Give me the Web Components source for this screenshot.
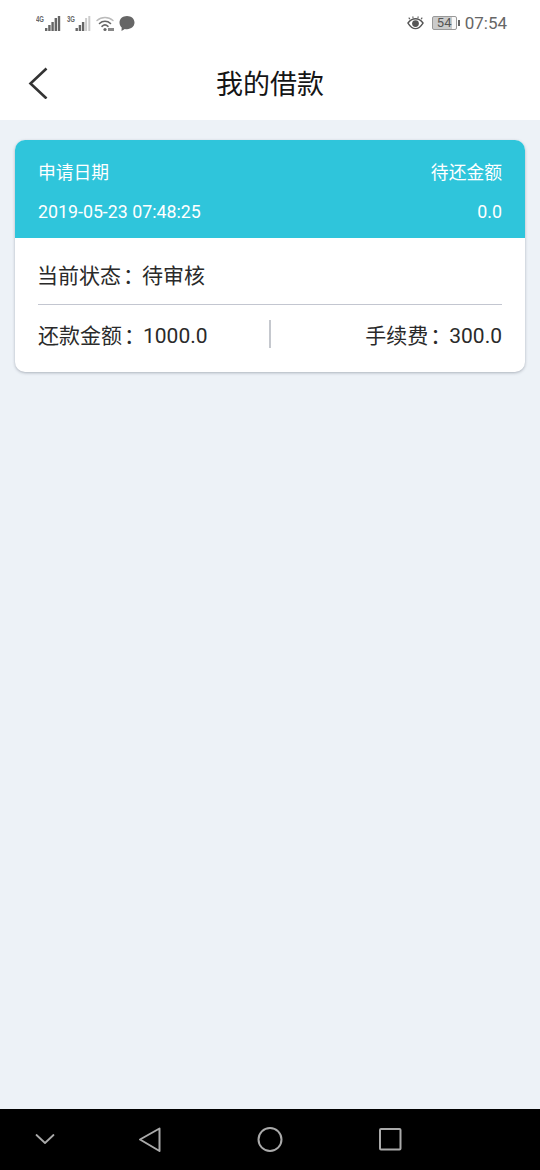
<!DOCTYPE html>
<html lang="zh">
<head>
<meta charset="UTF-8">
<meta name="viewport" content="width=device-width, initial-scale=1.0">
<title>我的借款</title>
<style>
    html, body { margin: 0; height: 100%; }
    body {
        width: 540px;
        height: 1170px;
        overflow: hidden;
        display: flex;
        flex-direction: column;
        background: #edf2f7;
        font-family: Roboto, "Noto Sans CJK SC", sans-serif;
    }
    page-content { flex: 1; }
</style>
</head>
<body>
<status-bar></status-bar>
<title-bar>我的借款</title-bar>
<page-content>
    <loan-card date="2019-05-23 07:48:25" remain="0.0" state="待审核" repay="1000.0" fee="300.0"></loan-card>
</page-content>
<nav-bar></nav-bar>

<script>
    class StatusBar extends HTMLElement {
        constructor() {
            super();
            const shadow = this.attachShadow({mode: 'open'});
            shadow.innerHTML = `
        <style>
          :host {
            display: flex;
            align-items: center;
            justify-content: space-between;
            height: 46px;
            padding: 0 33px 0 36px;
            background: #fff;
            color: #666;
            box-sizing: border-box;
          }
          .side { display: flex; align-items: center; }
          .time { font-size: 17px; margin-left: 5px; color: #666; }
          svg { display: block; }
          .tag {
            font: bold 9px "Liberation Sans", sans-serif;
            fill: #666;
          }
          .batt {
            width: 25px; height: 14px; box-sizing: border-box;
            border: 1px solid #999; border-radius: 2px;
            background: linear-gradient(90deg, #cbcbcb 84%, #f8f8f8 84%);
            font-size: 13px; line-height: 12px; text-align: center; color: #555;
            margin-left: 8px;
          }
          .nub { width: 2px; height: 6px; background: #666; margin-left: 1px; }
        </style>
        <div class="side">
          <svg width="100" height="20" viewBox="0 0 100 20">
            <text class="tag" x="0" y="9" textLength="8" lengthAdjust="spacingAndGlyphs">4G</text>
            <g fill="#666">
              <rect x="9" y="15" width="2.400" height="3"/><rect x="12.200" y="12" width="2.400" height="6"/>
              <rect x="15.400" y="9" width="2.400" height="9"/><rect x="18.600" y="5" width="2.400" height="13"/><rect x="21.800" y="3" width="2.400" height="15"/>
            </g>
            <text class="tag" x="31" y="9" textLength="8" lengthAdjust="spacingAndGlyphs">3G</text>
            <g fill="#666">
              <rect x="39.500" y="15" width="2.400" height="3"/><rect x="42.700" y="12" width="2.400" height="6"/><rect x="45.900" y="9" width="2.400" height="9"/>
            </g>
            <g fill="#ccc"><rect x="49.100" y="5" width="2" height="13"/><rect x="52.300" y="3" width="2" height="15"/></g>
            <g fill="none" stroke-linecap="round">
              <path d="M61 7.500a12 12 0 0 1 16 0" stroke="#bbb" stroke-width="1.400"/>
              <path d="M63.500 10.500a8 8 0 0 1 11 0" stroke="#666" stroke-width="1.600"/>
              <path d="M66 13.300a4.500 4.500 0 0 1 6 0" stroke="#666" stroke-width="1.600"/>
            </g>
            <circle cx="69" cy="16.500" r="1.600" fill="#666"/>
            <rect x="72" y="15" width="6" height="3" fill="#888"/>
            <path d="M91 3c4.300 0 7.500 2.800 7.500 6.600s-3.200 6.600-7.500 6.600c-.8 0-1.500-.1-2.200-.3L85.500 18l.2-3.500c-1.400-1.200-2.200-3-2.200-4.900C83.500 5.800 86.700 3 91 3z" fill="#666"/>
          </svg>
        </div>
        <div class="side">
          <svg width="17" height="15" viewBox="0 0 18 16" fill="none" stroke="#555">
            <path d="M1 7.500C3.500 4 6 3 9 3s5.500 1 8 4.500C14.500 11.500 12 13.500 9 13.500S3.500 11.500 1 7.500z" stroke-width="1.500"/>
            <circle cx="9" cy="8" r="3.600" fill="#555" stroke="none"/>
            <path d="M3 3.500 1.800 1.800M6.500 2 6 .5M11.500 2 12 .5M15 3.500l1.200-1.700" stroke-width="1.200"/>
          </svg>
          <div class="batt">54</div>
          <div class="nub"></div>
          <div class="time">07:54</div>
        </div>
      `;
        }
    }

    class TitleBar extends HTMLElement {
        constructor() {
            super();
            const shadow = this.attachShadow({mode: 'open'});
            shadow.innerHTML = `
        <style>
          :host {
            display: flex;
            align-items: center;
            justify-content: center;
            height: 74px;
            padding-bottom: 2px;
            box-sizing: border-box;
            background: #fff;
            position: relative;
            font-size: 27px;
            color: #151515;
          }
          svg { position: absolute; left: 28px; top: 21px; }
        </style>
        <svg width="22" height="32" viewBox="0 0 22 32" fill="none" stroke="#333" stroke-width="2.600">
          <path d="M18.500 1.500 2.500 16.500l16 15"/>
        </svg>
        <slot></slot>
      `;
        }
    }

    class LoanCard extends HTMLElement {
        constructor() {
            super();
            const shadow = this.attachShadow({mode: 'open'});
            const attr = name => this.getAttribute(name);
            // the colon sits further right in its cell than the default glyph
            const colon = '<i class="colon">：</i>';
            shadow.innerHTML = `
        <style>
          :host {
            display: block;
            margin: 20px 15px 0;
            background: #fff;
            border-radius: 10px;
            box-shadow: 0 1px 3px rgba(90, 100, 115, .45);
            overflow: hidden;
            color: #2a2a2a;
            font-size: 21px;
          }
          .head {
            height: 98px;
            box-sizing: border-box;
            padding: 21px 23px 0;
            background: #2fc5db;
            color: #fff;
            font-size: 17.800px;
          }
          .line { display: flex; justify-content: space-between; height: 24px; line-height: 24px; }
          .line + .line { margin-top: 15px; }
          .body { padding: 0 23px; }
          .state {
            height: 67px;
            box-sizing: border-box;
            padding-top: 23px;
            line-height: 30px;
            border-bottom: 1px solid #c3c6d0;
          }
          .state span { margin-left: -1px; }
          .amounts {
            height: 67px;
            display: grid;
            grid-template-columns: 1fr 1px 1fr;
            align-items: center;
          }
          .sep { height: 28px; background: #c5c8ce; margin: 0 0 10px -1px; }
          .amounts span { padding-bottom: 10px; }
          .amounts span:last-child { text-align: right; }
          .colon { font-style: normal; margin: 0 -2px 0 2px; }
        </style>
        <div class="head">
          <div class="line"><span>申请日期</span><span>待还金额</span></div>
          <div class="line"><span>${attr('date')}</span><span>${attr('remain')}</span></div>
        </div>
        <div class="body">
          <div class="state"><span>当前状态${colon}${attr('state')}</span></div>
          <div class="amounts">
            <span>还款金额${colon}${attr('repay')}</span>
            <div class="sep"></div>
            <span>手续费${colon}${attr('fee')}</span>
          </div>
        </div>
      `;
        }
    }

    class PageContent extends HTMLElement {
        constructor() {
            super();
            const shadow = this.attachShadow({mode: 'open'});
            shadow.innerHTML = `<style>:host { display: block; background: #edf2f7; }</style><slot></slot>`;
        }
    }

    class NavBar extends HTMLElement {
        constructor() {
            super();
            const shadow = this.attachShadow({mode: 'open'});
            shadow.innerHTML = `
        <style>
          :host { display: block; height: 61px; background: #000; }
          svg { display: block; }
        </style>
        <svg width="540" height="61" viewBox="0 0 540 61" fill="none" stroke="#aaa" stroke-width="2" stroke-linejoin="round" stroke-linecap="round">
          <path d="M36.500 26 45 34l8.500-8" stroke-width="1.800"/>
          <path d="M159.500 19.500 140 30.500 159.500 42z"/>
          <circle cx="270" cy="30.500" r="11.500"/>
          <rect x="380" y="20" width="20.500" height="20.500" rx="1"/>
        </svg>
      `;
        }
    }

    customElements.define('status-bar', StatusBar);
    customElements.define('title-bar', TitleBar);
    customElements.define('loan-card', LoanCard);
    customElements.define('page-content', PageContent);
    customElements.define('nav-bar', NavBar);
</script>
</body>
</html>
